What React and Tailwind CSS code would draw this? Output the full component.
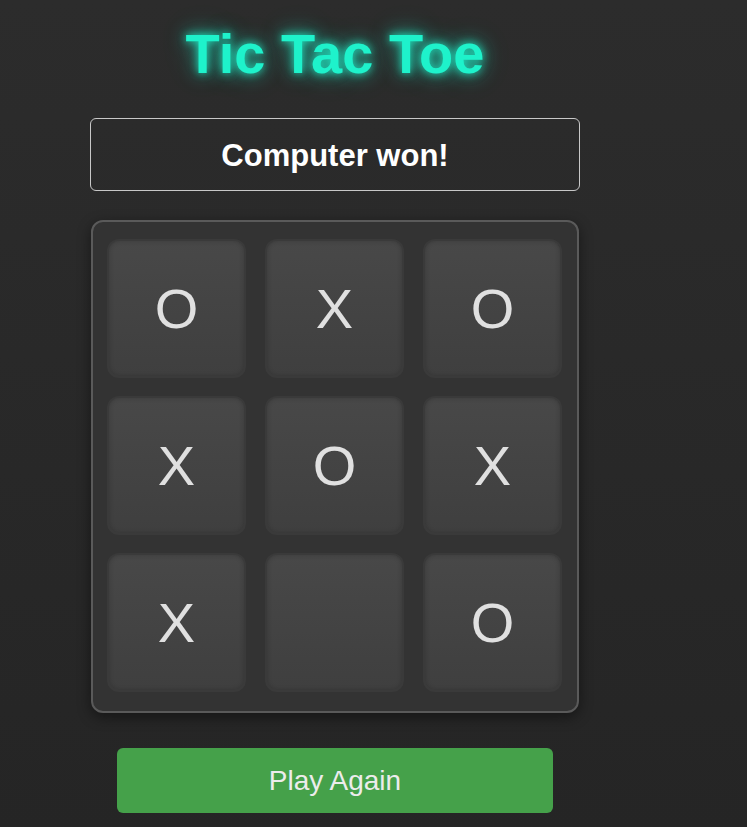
import React from 'react';

const board = ['O', 'X', 'O', 'X', 'O', 'X', 'X', '', 'O'];

export default function App() {
  return (
    <div className="min-h-screen bg-gradient-to-b from-[#2c2c2c] to-[#252525] font-['Liberation_Sans',Arial,sans-serif]">
      <div className="w-[490px] ml-[90px] pt-[22px] flex flex-col items-center">
        <h1 className="text-[56px] leading-[64px] font-bold text-[#1ef2cb] [text-shadow:0_0_8px_rgba(30,242,203,0.9),0_0_18px_rgba(30,242,203,0.6),0_0_30px_rgba(30,242,203,0.3)]">
          Tic Tac Toe
        </h1>

        {/* status */}
        <div className="mt-[32px] w-full h-[73px] border border-[#c8c8c8] rounded-[6px] flex items-center justify-center pt-[3px]">
          <span className="text-[31px] font-bold text-white">Computer won!</span>
        </div>

        {/* board */}
        <div className="mt-[29px] w-[488px] self-start ml-[1px] bg-[#333333] border-2 border-[#5a5a5a] rounded-[12px] px-[14px] pt-[17px] pb-[19px] shadow-[0_4px_14px_rgba(0,0,0,0.45)]">
          <div className="grid grid-cols-[repeat(3,139px)] auto-rows-[139px] gap-x-[19px] gap-y-[18px]">
            {board.map((v, i) => (
              <div
                key={i}
                className="flex items-center justify-center rounded-[12px] border-2 border-[#3a3a3a] bg-gradient-to-b from-[#484848] to-[#3f3f3f] shadow-[inset_0_0_5px_rgba(0,0,0,0.2)] text-[56px] text-[#e0e0e0]"
              >
                {v}
              </div>
            ))}
          </div>
        </div>

        <button className="mt-[35px] w-[436px] h-[65px] rounded-[6px] bg-[#45a14a] text-[28px] text-[#ececec]">
          Play Again
        </button>
      </div>
    </div>
  );
}
